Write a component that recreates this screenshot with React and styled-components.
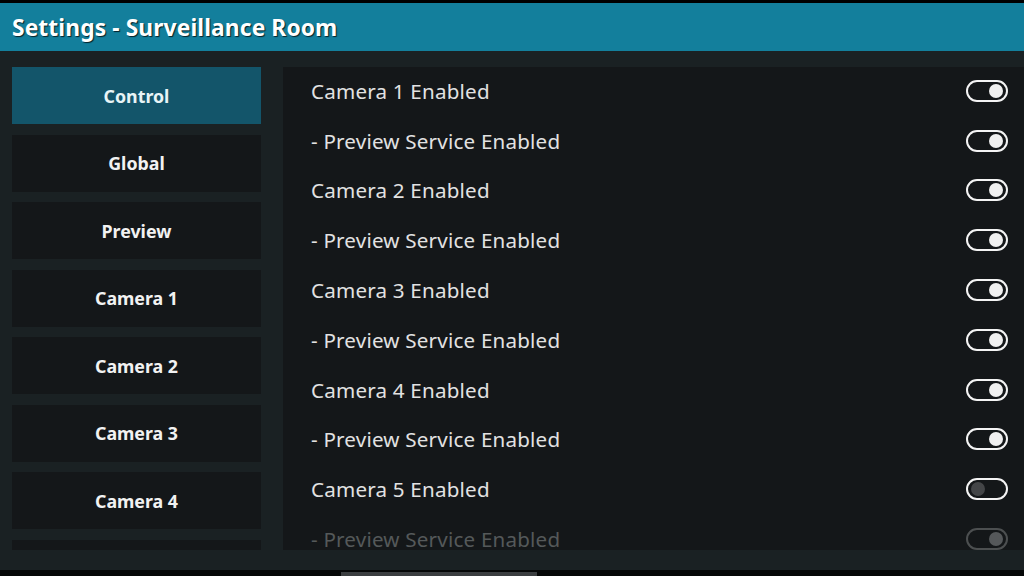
import React from "react";
import styled, { createGlobalStyle } from "styled-components";

const GlobalStyle = createGlobalStyle`
  html, body {
    margin: 0;
    padding: 0;
    background: #000;
  }
  * {
    box-sizing: border-box;
  }
`;

const Page = styled.div`
  width: 1024px;
  height: 576px;
  display: flex;
  flex-direction: column;
  background: #000;
  font-family: "Noto Sans", "Open Sans", sans-serif;
  overflow: hidden;
`;

const Header = styled.header`
  margin-top: 3px;
  height: 48px;
  flex: none;
  display: flex;
  align-items: center;
  padding-left: 12px;
  background: #137f9c;
`;

const Title = styled.h1`
  margin: 0;
  color: #fff;
  font-size: 22.8px;
  font-weight: 700;
  letter-spacing: 0.1px;
  text-shadow: 1px 1px 1px rgba(0, 0, 0, 0.75);
`;

const Body = styled.div`
  flex: 1;
  min-height: 0;
  display: flex;
  gap: 22px;
  padding: 16px 0 20px 12px;
  background: #1a2123;
  overflow: hidden;
`;

const Sidebar = styled.nav`
  width: 249px;
  flex: none;
  display: flex;
  flex-direction: column;
  gap: 10.5px;
  overflow: hidden;
`;

const NavItem = styled.div`
  height: 57px;
  flex: none;
  display: flex;
  align-items: center;
  justify-content: center;
  background: ${(p) => (p.active ? "#13556a" : "#141719")};
  color: ${(p) => (p.active ? "#e8f4f6" : "#f2f2f2")};
  font-size: 17.8px;
  font-weight: 700;
`;

const Panel = styled.section`
  flex: 1;
  display: flex;
  flex-direction: column;
  background: #141719;
  overflow: hidden;
`;

const Row = styled.div`
  height: 49.8px;
  flex: none;
  display: flex;
  align-items: center;
  justify-content: space-between;
  padding: 0 16px 2px 28px;
`;

const Label = styled.span`
  color: ${(p) => (p.disabled ? "#55595a" : "#e2e2e2")};
  font-size: 20.6px;
  font-weight: 400;
  letter-spacing: 0.2px;
`;

const Toggle = styled.span`
  width: 42px;
  height: 22px;
  display: flex;
  align-items: center;
  justify-content: ${(p) => (p.on ? "flex-end" : "flex-start")};
  padding: 0 3px;
  border: 2px solid ${(p) => (p.disabled ? "#4c4f50" : "#f4f4f4")};
  border-radius: 11px;
`;

const Knob = styled.span`
  width: 14px;
  height: 14px;
  border-radius: 50%;
  background: ${(p) =>
    p.disabled ? "#55585a" : p.on ? "#f0f0f0" : "#434547"};
`;

const Footer = styled.div`
  height: 6px;
  flex: none;
  display: flex;
  align-items: flex-end;
  padding-left: 341px;
  background: #050707;
`;

const FooterBar = styled.div`
  width: 196px;
  height: 4px;
  background: #3b3e40;
`;

const navItems = [
  "Control",
  "Global",
  "Preview",
  "Camera 1",
  "Camera 2",
  "Camera 3",
  "Camera 4",
  "Camera 5",
];

const settings = [
  { label: "Camera 1 Enabled", on: true },
  { label: "- Preview Service Enabled", on: true },
  { label: "Camera 2 Enabled", on: true },
  { label: "- Preview Service Enabled", on: true },
  { label: "Camera 3 Enabled", on: true },
  { label: "- Preview Service Enabled", on: true },
  { label: "Camera 4 Enabled", on: true },
  { label: "- Preview Service Enabled", on: true },
  { label: "Camera 5 Enabled", on: false },
  { label: "- Preview Service Enabled", on: true, disabled: true },
];

const App = () => {
  return (
    <>
      <GlobalStyle />
      <Page>
        <Header>
          <Title>Settings - Surveillance Room</Title>
        </Header>
        <Body>
          <Sidebar>
            {navItems.map((item, i) => (
              <NavItem key={item} active={i === 0}>
                {item}
              </NavItem>
            ))}
          </Sidebar>
          <Panel>
            {settings.map((s, i) => (
              <Row key={i}>
                <Label disabled={s.disabled}>{s.label}</Label>
                <Toggle on={s.on} disabled={s.disabled}>
                  <Knob on={s.on} disabled={s.disabled} />
                </Toggle>
              </Row>
            ))}
          </Panel>
        </Body>
        <Footer>
          <FooterBar />
        </Footer>
      </Page>
    </>
  );
};

export default App;
